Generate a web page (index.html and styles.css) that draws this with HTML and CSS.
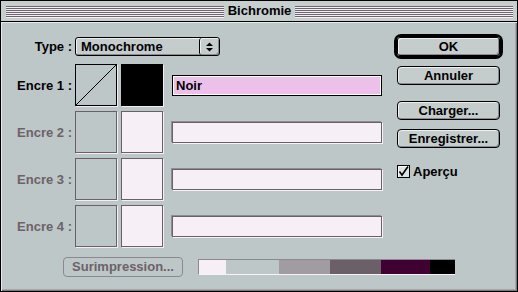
FILE: index.html
```html
<!DOCTYPE html>
<html lang="fr">
<head>
  <meta charset="UTF-8" />
  <title>Bichromie</title>
  <link rel="stylesheet" href="styles.css">
</head>
<body>
  <div class="window">
    <div class="titlebar">
      <span class="stripes"></span>
      <span class="title">Bichromie</span>
      <span class="stripes"></span>
    </div>

    <div class="content">
      <div class="main">
        <div class="type-row">
          <span class="label">Type :</span>
          <div class="select">
            <span class="select-text">Monochrome</span>
            <span class="select-arrows">
              <svg width="8" height="10" viewBox="0 0 8 10">
                <polygon points="0,4 7,4 3.5,0.5" fill="#000"/>
                <polygon points="0,6 7,6 3.5,9.5" fill="#000"/>
              </svg>
            </span>
          </div>
        </div>

        <div class="ink-row">
          <span class="label">Encre 1 :</span>
          <div class="swatch curve">
            <svg width="40" height="40" viewBox="0 0 40 40">
              <line x1="0" y1="40" x2="40" y2="0" stroke="#000" stroke-width="1"/>
            </svg>
          </div>
          <div class="swatch color black"></div>
          <div class="field active">Noir</div>
        </div>

        <div class="ink-row off">
          <span class="label">Encre 2 :</span>
          <div class="swatch curve"></div>
          <div class="swatch color"></div>
          <div class="field"></div>
        </div>

        <div class="ink-row off">
          <span class="label">Encre 3 :</span>
          <div class="swatch curve"></div>
          <div class="swatch color"></div>
          <div class="field"></div>
        </div>

        <div class="ink-row off">
          <span class="label">Encre 4 :</span>
          <div class="swatch curve"></div>
          <div class="swatch color"></div>
          <div class="field"></div>
        </div>

        <div class="bottom-row">
          <button class="btn disabled overprint">Surimpression...</button>
          <div class="ramp">
            <span class="seg seg-1"></span>
            <span class="seg seg-2"></span>
            <span class="seg seg-3"></span>
            <span class="seg seg-4"></span>
            <span class="seg seg-5"></span>
            <span class="seg seg-6"></span>
          </div>
        </div>
      </div>

      <div class="side">
        <div class="default-ring">
          <button class="btn">OK</button>
        </div>
        <button class="btn cancel">Annuler</button>
        <button class="btn load">Charger...</button>
        <button class="btn save">Enregistrer...</button>
        <label class="check">
          <span class="box">
            <svg width="11" height="11" viewBox="0 0 11 11">
              <polyline points="1.5,5.5 4,9 10,0.5" fill="none" stroke="#000" stroke-width="1.6"/>
            </svg>
          </span>
          Aperçu
        </label>
      </div>
    </div>
  </div>
</body>
</html>
```

FILE: styles.css
```css
* {
  margin: 0;
  padding: 0;
  box-sizing: border-box;
  font-family: 'Liberation Sans', Arial, sans-serif;
  font-weight: bold;
  font-size: 13px;
}

body {
  background: #bec7c7;
}

.window {
  width: 518px;
  height: 292px;
  border: 1px solid #000;
  background: #bec7c7;
  display: flex;
  flex-direction: column;
}

/* title bar */

.titlebar {
  height: 21px;
  border-bottom: 1px solid #000;
  background: #c6cece;
  display: flex;
  align-items: center;
  padding: 0 4px 0 5px;
}

.stripes {
  flex: 1;
  height: 12px;
  margin-top: 1px;
  background: repeating-linear-gradient(to bottom, #6c6470 0, #6c6470 1px, #f2eef2 1px, #f2eef2 2px);
}

.title {
  padding: 0 4px;
  color: #000;
  line-height: 16px;
}

/* content */

.content {
  flex: 1;
  display: flex;
  box-shadow: inset 1px 1px 0 #e6eaea, inset -1px -1px 0 #7c7880, inset -2px -2px 0 #a4a8a8;
}

.main {
  width: 381px;
  flex-shrink: 0;
  padding: 15px 0 0 11px;
  display: flex;
  flex-direction: column;
}

.label {
  width: 60px;
  margin-right: 3px;
  text-align: right;
  color: #000;
}

.type-row {
  display: flex;
  align-items: center;
  height: 19px;
  margin-bottom: 3px;
}

.select {
  width: 145px;
  height: 19px;
  border: 1px solid #000;
  border-radius: 3px;
  background: #c4cccc;
  box-shadow: inset 1px 1px 0 #eef0f0, inset -1px -1px 0 #8a8890;
  display: flex;
  align-items: center;
}

.select-text {
  flex: 1;
  padding-left: 5px;
  line-height: 17px;
}

.select-arrows {
  width: 20px;
  height: 17px;
  border-left: 1px solid #000;
  border-radius: 3px;
  display: flex;
  align-items: center;
  justify-content: center;
  box-shadow: inset 1px 1px 0 #eef0f0, inset -1px -1px 0 #8a8890;
}

/* ink rows */

.ink-row {
  display: flex;
  align-items: center;
  height: 42px;
  margin-top: 5px;
}

.swatch {
  width: 42px;
  height: 42px;
  flex-shrink: 0;
  margin-right: 4px;
  border: 1px solid #000;
  box-shadow: 1px 1px 0 #f2eef2;
}

.swatch svg {
  display: block;
}

.swatch.color {
  margin-right: 9px;
}

.swatch.black {
  background: #000;
}

.field {
  width: 210px;
  height: 21px;
  flex-shrink: 0;
  padding-left: 3px;
  line-height: 19px;
  border: 1px solid #000;
}

.field.active {
  background: #ecc0e8;
  box-shadow: inset 1px 1px 0 #fff, inset -1px -1px 0 #fff;
  color: #000;
}

.ink-row.off .label {
  color: #6c6268;
}

.ink-row.off .swatch {
  border-color: #6c6068;
}

.ink-row.off .swatch.color {
  background: #f6eff6;
}

.ink-row.off .field {
  border-color: #6c6068;
  background: #f6eff6;
  box-shadow: -1px -1px 0 #908c94, 1px 1px 0 #f6f4f6;
}

/* bottom row */

.bottom-row {
  display: flex;
  align-items: center;
  margin-top: 10px;
  padding-left: 51px;
}

.ramp {
  display: flex;
  flex-shrink: 0;
  width: 257px;
  height: 16px;
  margin-left: 15px;
  border-top: 1px solid #8c8890;
  border-left: 1px solid #8c8890;
  border-bottom: 1px solid #f6f4f6;
}

.seg-1 { width: 27px; background: #f6eff6; }
.seg-2 { width: 53px; background: #bec7c7; }
.seg-3 { width: 51px; background: #a09ca2; }
.seg-4 { width: 51px; background: #6c6068; }
.seg-5 { width: 49px; background: #400032; }
.seg-6 { flex: 1; background: #000; }

/* buttons */

.btn {
  width: 103px;
  height: 19px;
  flex-shrink: 0;
  border: 1px solid #000;
  border-radius: 4px;
  background: #c4cccc;
  box-shadow: inset 1px 1px 0 #eef0f0, inset -1px -1px 0 #8a8890;
  color: #000;
  text-align: center;
  line-height: 16px;
}

.btn.disabled {
  border-color: #8c8890;
  color: #6c6268;
  box-shadow: none;
  background: #bec7c7;
}

.overprint {
  width: 120px;
  height: 20px;
}

.side {
  padding: 12px 0 0 12px;
  display: flex;
  flex-direction: column;
  align-items: flex-start;
}

.default-ring {
  width: 109px;
  height: 25px;
  border: 3px solid #000;
  border-radius: 7px;
  display: flex;
}

.default-ring .btn {
  border: none;
  border-radius: 3px;
  height: 19px;
  box-shadow: inset 0 0 0 1px #000, inset 2px 2px 0 #eef0f0, inset -2px -2px 0 #8a8890;
}

.side > .btn,
.check {
  margin-left: 3px;
}

.cancel {
  margin-top: 7px;
}

.load {
  margin-top: 16px;
}

.save {
  margin-top: 9px;
}

.check {
  margin-top: 17px;
  display: flex;
  align-items: center;
  color: #000;
  line-height: 13px;
}

.box {
  width: 13px;
  height: 13px;
  margin-right: 3px;
  border: 1px solid #000;
  background: #dde2e2;
  box-shadow: inset 1px 1px 0 #fff;
  display: flex;
  align-items: center;
  justify-content: center;
}

.box svg {
  display: block;
}
```
